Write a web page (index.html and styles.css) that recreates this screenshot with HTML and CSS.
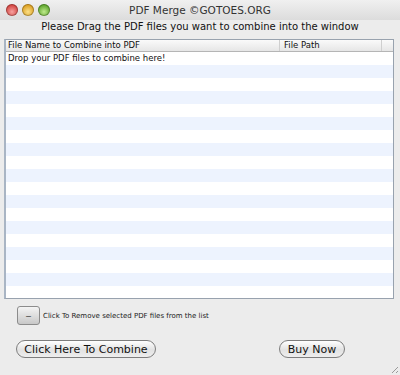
FILE: index.html
```html
<!DOCTYPE html>
<html lang="en">
<head>
    <meta charset="UTF-8">
    <title>PDF Merge</title>
    <link rel="stylesheet" href="styles.css">
</head>
<body>
    <div class="window">
        <div class="titlebar">
            <div class="lights">
                <span class="light red"></span>
                <span class="light yellow"></span>
                <span class="light green"></span>
            </div>
            <div class="title">PDF Merge ©GOTOES.ORG</div>
            <div></div>
        </div>

        <p class="prompt">Please Drag the PDF files you want to combine into the window</p>

        <div class="table">
            <div class="thead">
                <div class="col-name">File Name to Combine into PDF</div>
                <div class="col-path">File Path</div>
                <div class="col-corner"></div>
            </div>
            <div class="tbody" id="rows"></div>
        </div>

        <div class="remove-row">
            <button class="btn-minus">–</button>
            <span class="remove-label">Click To Remove selected PDF files from the list</span>
        </div>

        <div class="actions">
            <button class="pill">Click Here To Combine</button>
            <button class="pill buy">Buy Now</button>
        </div>

        <div class="grip"></div>
    </div>

    <script>
        const rows = document.getElementById("rows");
        for (let i = 0; i < 19; i++) {
            const row = document.createElement("div");
            row.className = i % 2 ? "row alt" : "row";
            if (i === 0) {
                row.textContent = "Drop your PDF files to combine here!";
            }
            rows.appendChild(row);
        }
    </script>
</body>
</html>
```

FILE: styles.css
```css
body {
    margin: 0;
    background: #ececec;
    font-family: "DejaVu Sans", Verdana, sans-serif;
    color: #111;
}

.window {
    width: 400px;
    height: 375px;
    display: flex;
    flex-direction: column;
    position: relative;
    background: #ececec;
}

.titlebar {
    height: 20px;
    display: grid;
    grid-template-columns: 1fr auto 1fr;
    align-items: center;
    background: linear-gradient(to bottom, #f0f0f0, #dcdcdc);
}

.lights {
    display: flex;
    gap: 4px;
    padding-left: 6px;
}

.light {
    width: 12px;
    height: 12px;
    border-radius: 50%;
    box-shadow: inset 0 0 0 1px rgba(0, 0, 0, 0.25);
}

.red {
    background: radial-gradient(circle at 50% 65%, #f7a2a0, #d2433f 70%);
}

.yellow {
    background: radial-gradient(circle at 50% 65%, #fbe089, #dc9f1f 70%);
}

.green {
    background: radial-gradient(circle at 50% 65%, #bfea8c, #5da52b 70%);
}

.title {
    font-size: 10.5px;
    color: #333;
}

.prompt {
    margin: 0;
    height: 18px;
    line-height: 14px;
    text-align: center;
    font-size: 10px;
    color: #111;
}

.table {
    margin: 1px 6px 0 4px;
    height: 258px;
    border: 1px solid #98a2ae;
    border-left: 2px solid #a9b5c4;
    background: #fff;
    display: flex;
    flex-direction: column;
    overflow: hidden;
}

.thead {
    height: 11px;
    display: flex;
    font-size: 8.5px;
    line-height: 11px;
    background: linear-gradient(to bottom, #fafafa, #e6e6e6);
    border-bottom: 1px solid #b5b5b5;
}

.col-name {
    width: 271px;
    padding-left: 2px;
    border-right: 1px solid #cfcfcf;
}

.col-path {
    flex: 1;
    padding-left: 4px;
    border-right: 1px solid #cfcfcf;
}

.col-corner {
    width: 11px;
}

.row {
    height: 13px;
    line-height: 13px;
    font-size: 8.5px;
    padding-left: 2px;
    background: #fff;
}

.row.alt {
    background: #edf3fe;
}

.remove-row {
    display: flex;
    align-items: center;
    gap: 3px;
    margin: 7px 0 0 17px;
}

.btn-minus {
    width: 23px;
    height: 19px;
    padding: 0;
    border: 1px solid #8c8c8c;
    border-radius: 3px;
    background: linear-gradient(to bottom, #f4f4f4, #c8c8c8);
    font-size: 9px;
    color: #333;
}

.remove-label {
    font-size: 7px;
    color: #222;
}

.actions {
    display: flex;
    justify-content: space-between;
    margin: 15px 0 0 16px;
    width: 329px;
}

.pill {
    height: 18px;
    padding: 0;
    border: 1px solid #7d7d7d;
    border-radius: 9px;
    background: linear-gradient(to bottom, #ffffff, #e2e2e2 55%, #eeeeee);
    font-family: "DejaVu Sans", Verdana, sans-serif;
    font-size: 11px;
    color: #111;
    width: 140px;
}

.pill.buy {
    width: 66px;
}

.grip {
    position: absolute;
    right: 2px;
    bottom: 2px;
    width: 9px;
    height: 9px;
    background: repeating-linear-gradient(135deg, transparent 0 2px, #9a9a9a 2px 3px);
    clip-path: polygon(100% 0, 100% 100%, 0 100%);
}
```
